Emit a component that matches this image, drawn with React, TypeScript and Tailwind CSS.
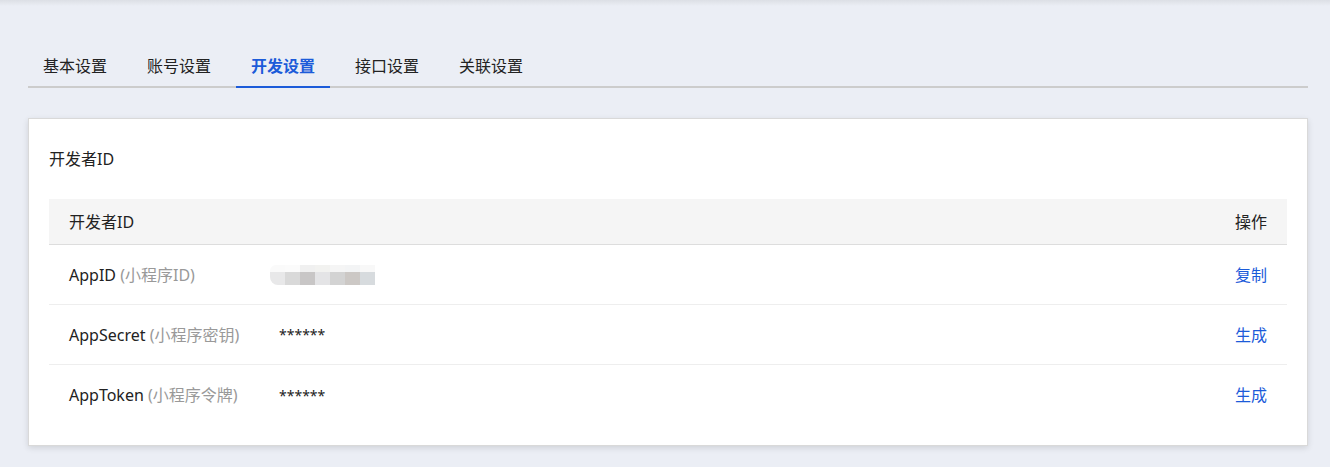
import React from 'react'

const tabs = ['基本设置', '账号设置', '开发设置', '接口设置', '关联设置']

const rows = [
  { name: 'AppID', note: '(小程序ID)', value: null, action: '复制' },
  { name: 'AppSecret', note: '(小程序密钥)', value: '******', action: '生成' },
  { name: 'AppToken', note: '(小程序令牌)', value: '******', action: '生成' },
]

// blurred appid, two rows of mosaic blocks
const mosaicTop = ['bg-[#fafafa]', 'bg-[#fbfbfb]', 'bg-[#f0f0f0]', 'bg-[#f2f2f0]', 'bg-[#f5f5f5]', 'bg-[#f3f4f5]', 'bg-[#f8f8f8]']
const mosaicBottom = ['bg-[#e8e8e9]', 'bg-[#d9d9d9]', 'bg-[#c8c6c6]', 'bg-[#e4e4e6]', 'bg-[#d3d3d3]', 'bg-[#ccc8c5]', 'bg-[#d7dbde]']

const Mosaic = () => (
  <div className="flex flex-col -ml-[9px]">
    <div className="flex">
      {mosaicTop.map((c, i) => (
        <div key={i} className={`w-[15px] h-[7px] ${c} ${i === 0 ? 'rounded-tl-[6px]' : ''}`} />
      ))}
    </div>
    <div className="flex">
      {mosaicBottom.map((c, i) => (
        <div key={i} className={`w-[15px] h-[13px] ${c} ${i === 0 ? 'rounded-bl-[8px]' : ''}`} />
      ))}
    </div>
  </div>
)

export default function App() {
  return (
    <div
      className="min-h-[467px] bg-[#ebeef5] text-[#222]"
      style={{ fontFamily: '"Microsoft YaHei", "Noto Sans", "Noto Sans CJK SC", sans-serif' }}
    >
      {/* top header shadow */}
      <div className="h-[6px] bg-gradient-to-b from-[#dcdfe5] to-[#ebeef5]" />

      <div className="pl-[28px] pr-[22px] pt-[40px]">
        {/* Tabs */}
        <div className="flex gap-[10px] border-b-2 border-[#cccccc]">
          {tabs.map((t) => {
            const active = t === '开发设置'
            return (
              <div
                key={t}
                className={`w-[94px] h-[42px] flex items-center justify-center text-[16px] leading-[22px] -mb-[2px] border-b-2 ${
                  active ? 'border-[#1c5bd9] text-[#1c5bd9] font-bold' : 'border-transparent text-[#222]'
                }`}
              >
                {t}
              </div>
            )
          })}
        </div>

        {/* Card */}
        <div className="mt-[30px] bg-white border border-[#d9d9d9] shadow-[0_2px_6px_rgba(0,0,0,0.12)] px-5 pb-5">
          <div className="h-[80px] flex items-center text-[16px] leading-[22px]">开发者ID</div>

          <div>
            <div className="h-[46px] bg-[#f5f5f5] border-b border-[#dddddd] flex items-center justify-between px-5 text-[16px] leading-[22px]">
              <span>开发者ID</span>
              <span>操作</span>
            </div>
            {rows.map((r, i) => (
              <div
                key={r.name}
                className={`h-[60px] flex items-center px-5 text-[16px] leading-[22px] ${
                  i < rows.length - 1 ? 'border-b border-[#eeeeee]' : ''
                }`}
              >
                <div className="w-[210px] shrink-0">
                  {r.name} <span className="text-[#999999]">{r.note}</span>
                </div>
                <div className="flex-1">
                  {r.value ? <span className="text-[14px]">{r.value}</span> : <Mosaic />}
                </div>
                <span className="text-[#1c5bd9] cursor-pointer">{r.action}</span>
              </div>
            ))}
          </div>
        </div>
      </div>
    </div>
  )
}
